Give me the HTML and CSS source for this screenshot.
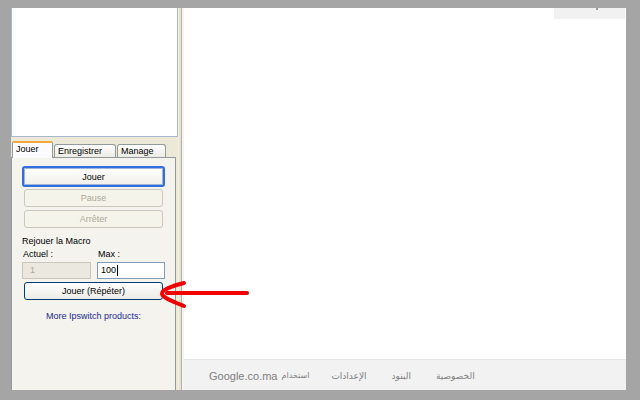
FILE: index.html
```html
<!DOCTYPE html>
<html lang="fr">
<head>
<meta charset="utf-8">
<title>iMacros</title>
<link rel="stylesheet" href="styles.css">
</head>
<body>
<div class="screen">
  <div class="side">
    <div class="tree"></div>
    <div class="tabs">
      <div class="tab active">Jouer</div>
      <div class="tab t2">Enregistrer</div>
      <div class="tab t3">Manage</div>
    </div>
    <div class="page">
      <button class="btn focus">Jouer</button>
      <button class="btn dis">Pause</button>
      <button class="btn dis">Arrêter</button>
      <div class="label title">Rejouer la Macro</div>
      <div class="row">
        <div class="col c1"><div class="label">Actuel :</div><div class="input idis">1</div></div>
        <div class="col c2"><div class="label">Max :</div><div class="input">100<span class="caret"></span></div></div>
      </div>
      <button class="btn repeat">Jouer (Répéter)</button>
      <div class="link">More Ipswitch products:</div>
    </div>
  </div>
  <div class="splitter"></div>
  <div class="main">
    <div class="top"><div class="bar"><span class="dot"></span></div></div>
    <div class="footer">
      <span class="fi f1"><span class="en">Google.co.ma</span><span class="ar a1" dir="rtl">استخدام</span></span>
      <span class="fi ar f2" dir="rtl">الإعدادات</span>
      <span class="fi ar f3" dir="rtl">البنود</span>
      <span class="fi ar f4" dir="rtl">الخصوصية</span>
    </div>
  </div>
  <svg class="arrow" width="640" height="400" viewBox="0 0 640 400">
    <path d="M184 283 C172 286 161 290 162 294 C163 298 174 302 184 306" fill="none" stroke="#f00000" stroke-width="4" stroke-linecap="round"/>
    <path d="M167 293 L247 293" fill="none" stroke="#f00000" stroke-width="4" stroke-linecap="round"/>
  </svg>
</div>
</body>
</html>
```
FILE: styles.css
```css
html, body {
  margin: 0;
  padding: 0;
}
body {
  background: #a5a5a5;
  font-family: "Liberation Sans", "DejaVu Sans", sans-serif;
}
.screen {
  position: relative;
  width: 640px;
  height: 400px;
  box-sizing: border-box;
  padding: 8px 14px 10px 11px;
  display: flex;
}
.side {
  width: 167px;
  display: flex;
  flex-direction: column;
  background: #ece9d8;
}
.tree {
  height: 129px;
  box-sizing: border-box;
  border: 1px solid #a9b8cc;
  border-top: none;
  background: #fff;
}
.tabs {
  margin-top: 4px;
  height: 16px;
  display: flex;
  align-items: flex-end;
  padding-left: 1px;
  position: relative;
  z-index: 1;
  font-size: 9px;
}
.tab {
  box-sizing: border-box;
  height: 13px;
  border: 1px solid #919b9c;
  border-bottom: none;
  border-radius: 3px 3px 0 0;
  background: linear-gradient(#ffffff, #ecebe5);
  padding: 1px 0 0 3px;
  line-height: 11px;
  color: #000;
}
.tab.active {
  width: 41px;
  height: 17px;
  margin-bottom: -1px;
  border-top: 2px solid #f3a83a;
  background: #fcfcfe;
  padding-top: 1px;
  line-height: 11px;
  border-radius: 2px 2px 0 0;
}
.tab.t2 {
  width: 62px;
  margin-left: 1px;
}
.tab.t3 {
  width: 49px;
  margin-left: 1px;
}
.page {
  flex: 1;
  margin-right: 2px;
  border: 1px solid #919b9c;
  border-bottom: none;
  background: #f4f3ee;
  padding: 8px 10px 0 10px;
  display: flex;
  flex-direction: column;
  font-size: 9px;
}
.btn {
  display: block;
  box-sizing: border-box;
  font-family: "Liberation Sans", "DejaVu Sans", sans-serif;
  font-size: 9px;
  padding: 0;
  margin: 0;
  text-align: center;
}
.btn.focus {
  height: 21px;
  width: 100%;
  border: 2px solid #2f6fdf;
  border-radius: 3px;
  background: linear-gradient(#ffffff, #f0efea);
  box-shadow: inset 0 0 0 1px #9fb4d6;
  color: #000;
}
.btn.dis {
  height: 18px;
  margin: 2px 2px 0;
  border: 1px solid #cac8bb;
  border-radius: 3px;
  background: #f5f4ea;
  color: #aca899;
}
.btn.dis + .btn.dis {
  margin-top: 3px;
}
.label {
  line-height: 12px;
  color: #000;
}
.title {
  margin-top: 7px;
}
.row {
  margin-top: 1px;
  display: flex;
  gap: 6px;
}
.col.c1 {
  width: 69px;
}
.col.c2 {
  width: 68px;
}
.col .label {
  padding-left: 1px;
}
.input {
  margin-top: 2px;
  height: 17px;
  box-sizing: border-box;
  border: 1px solid #7f9db9;
  background: #fff;
  line-height: 15px;
  padding-left: 3px;
  color: #000;
  display: flex;
  align-items: center;
}
.input.idis {
  background: #ebe9df;
  border-color: #c9c7ba;
  color: #aca899;
  padding-left: 7px;
}
.caret {
  display: inline-block;
  width: 1px;
  height: 11px;
  background: #000;
  margin-left: 1px;
}
.btn.repeat {
  height: 18px;
  margin: 3px 2px 0;
  border: 1px solid #003c74;
  border-radius: 3px;
  background: linear-gradient(#ffffff, #ecebe6);
  color: #000;
}
.link {
  margin-top: 10px;
  line-height: 12px;
  text-align: center;
  color: #1a2a90;
}
.splitter {
  width: 6px;
  background: linear-gradient(to right, #f2f1ec 0, #f2f1ec 1px, #e6e2cc 1px, #e6e2cc 3px, #b4b4ae 3px, #b4b4ae 4px, #f4f4f4 4px);
}
.main {
  flex: 1;
  display: flex;
  flex-direction: column;
  background: #fff;
}
.top {
  flex: 1;
}
.bar {
  margin-left: auto;
  margin-right: 1px;
  width: 71px;
  height: 11px;
  background: #f1f1f1;
  padding-left: 42px;
  box-sizing: border-box;
}
.dot {
  display: block;
  width: 2px;
  height: 2px;
  background: #9a9a9a;
}
.footer {
  height: 31px;
  box-sizing: border-box;
  border-top: 1px solid #e4e4e4;
  background: #f2f2f2;
  display: flex;
  align-items: center;
  padding-left: 25px;
  padding-top: 1px;
  font-size: 11px;
  color: #808080;
}
.fi {
  display: flex;
  align-items: center;
}
.en {
  margin-right: 4px;
}
.ar {
  font-size: 9px;
}
.ar.a1 {
  font-size: 8px;
}
.f2 {
  margin-left: 22px;
}
.f3 {
  margin-left: 25px;
}
.f4 {
  margin-left: 25px;
}
.arrow {
  position: absolute;
  left: 0;
  top: 0;
  pointer-events: none;
}
```
